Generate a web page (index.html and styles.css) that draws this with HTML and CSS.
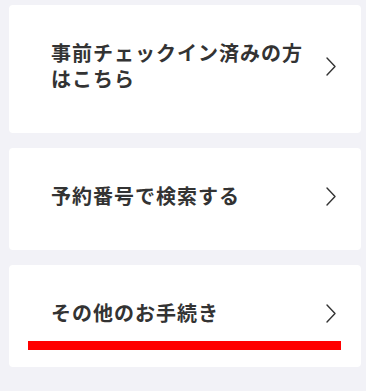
FILE: index.html
```html
<!DOCTYPE html>
<html lang="ja">
<head>
<meta charset="utf-8">
<link rel="stylesheet" href="styles.css">
</head>
<body>
<div class="list">
  <a class="card">
    <span class="label">事前チェックイン済みの方はこちら</span>
    <svg class="chev" viewBox="0 0 10 19" width="10" height="19"><path d="M1 1 L9 9.5 L1 18" fill="none" stroke="#333" stroke-width="1.4" stroke-linecap="round" stroke-linejoin="round"/></svg>
  </a>
  <a class="card">
    <span class="label">予約番号で検索する</span>
    <svg class="chev" viewBox="0 0 10 19" width="10" height="19"><path d="M1 1 L9 9.5 L1 18" fill="none" stroke="#333" stroke-width="1.4" stroke-linecap="round" stroke-linejoin="round"/></svg>
  </a>
  <a class="card marked">
    <span class="label">その他のお手続き</span>
    <svg class="chev" viewBox="0 0 10 19" width="10" height="19"><path d="M1 1 L9 9.5 L1 18" fill="none" stroke="#333" stroke-width="1.4" stroke-linecap="round" stroke-linejoin="round"/></svg>
    <span class="mark"></span>
  </a>
</div>
</body>
</html>
```
FILE: styles.css
```css
html, body {
  margin: 0;
  padding: 0;
  background: #f2f2f7;
}
body {
  font-family: "Noto Sans CJK JP", "Noto Sans", sans-serif;
  color: #333;
}
.list {
  display: flex;
  flex-direction: column;
  gap: 15px;
  padding: 5px 5px 0 9px;
}
.card {
  position: relative;
  display: flex;
  align-items: center;
  justify-content: space-between;
  background: #fff;
  border-radius: 4px;
  padding: 35px 25px 41px 42px;
}
.label {
  font-size: 20px;
  font-weight: 700;
  letter-spacing: 1px;
  line-height: 26px;
  max-width: 262px;
}
.chev {
  flex: none;
  display: block;
}
.mark {
  position: absolute;
  left: 19px;
  top: 76px;
  width: 313px;
  height: 9px;
  background: #ff0000;
}
```
